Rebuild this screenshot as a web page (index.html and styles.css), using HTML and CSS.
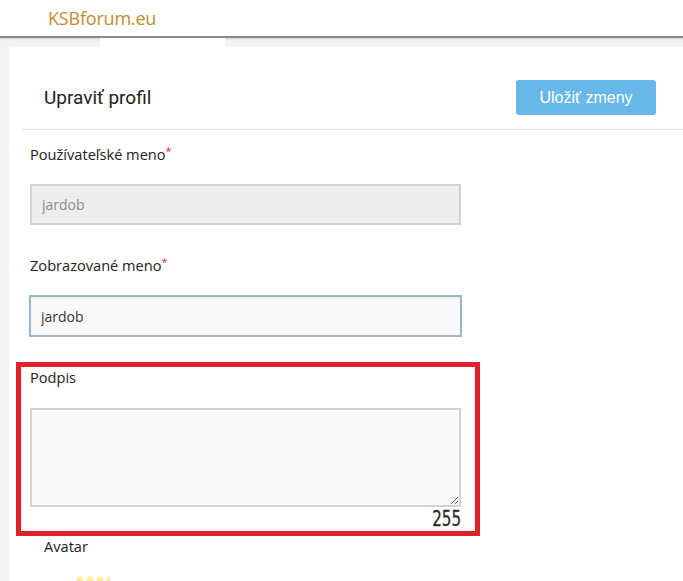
FILE: index.html
```html
<!DOCTYPE html>
<html lang="sk">
<head>
  <meta charset="UTF-8">
  <title>Upraviť profil – KSBforum.eu</title>
  <link rel="stylesheet" href="styles.css">
</head>
<body>

<header class="topbar">
  <a class="logo" href="#">KSBforum.eu</a>
</header>

<div class="tabs">
  <div class="tab"></div>
</div>

<main class="card">
  <div class="card-head">
    <h1>Upraviť profil</h1>
    <button class="btn-save">Uložiť zmeny</button>
  </div>

  <form class="profile-form">
    <div class="field">
      <label>Používateľské meno<span class="req">*</span></label>
      <input class="input disabled" type="text" value="jardob" disabled>
    </div>

    <div class="field">
      <label>Zobrazované meno<span class="req">*</span></label>
      <input class="input focused" type="text" value="jardob">
    </div>

    <div class="field highlight">
      <label>Podpis</label>
      <textarea class="textarea"></textarea>
      <div class="counter"><span>255</span></div>
    </div>

    <div class="field avatar">
      <label>Avatar</label>
      <div class="avatar-preview"></div>
    </div>
  </form>
</main>

</body>
</html>
```

FILE: styles.css
```css
body {
  margin: 0;
  padding: 0;
  background-color: #f3f3f3;
  font-family: "Open Sans", "Noto Sans", sans-serif;
  color: #333;
  overflow: hidden;
}
.topbar {
  background: white;
  height: 36px;
  border-bottom: 2px solid #8c8c8c;
  box-shadow: 0 1px 2px rgba(0,0,0,0.15);
  padding-left: 48px;
  display: flex;
  align-items: center;
}
.logo {
  color: #c38b2c;
  font-size: 18px;
  text-decoration: none;
  letter-spacing: -0.2px;
  margin-top: -1px;
}
.tabs {
  height: 9px;
  padding-left: 100px;
  display: flex;
}
.tab {
  width: 125px;
  background: white;
}
.card {
  background: white;
  margin-left: 9px;
  height: 534px;
  overflow: hidden;
}
.card-head {
  margin-left: 13px;
  padding: 33px 27px 14px 22px;
  border-bottom: 1px solid #e4e4e4;
  display: flex;
  align-items: center;
  justify-content: space-between;
}
.card-head h1 {
  margin: 0;
  font-family: Roboto, "Liberation Sans", sans-serif;
  font-weight: normal;
  font-size: 19px;
  color: #222;
}
.btn-save {
  width: 140px;
  height: 35px;
  background-color: #67b7eb;
  color: white;
  border: none;
  border-radius: 3px;
  font-family: "Liberation Sans", Arial, sans-serif;
  font-size: 16px;
  padding: 0;
}
.profile-form {
  padding: 14px 0 0 21px;
  width: 431px;
}
.field {
  margin-bottom: 30px;
}
.field label {
  display: block;
  font-size: 14.6px;
  line-height: 20px;
  color: #222;
  margin-bottom: 20px;
}
.req {
  color: #d9302c;
  font-size: 11px;
  vertical-align: top;
  line-height: 14px;
}
.input {
  box-sizing: border-box;
  width: 431px;
  height: 41px;
  padding: 0 10px;
  border: 1px solid #c9c9c9;
  font-family: "Open Sans", "Noto Sans", sans-serif;
  font-size: 14px;
  color: #333;
  background: #fafafa;
  display: block;
}
.input.disabled {
  background: #eeeeee;
  color: #8a8a8a;
  border-width: 2px;
  border-color: #d2d2d2;
}
.input.focused {
  height: 42px;
  margin-left: -1px;
  width: 433px;
  border: 2px solid #9cb9cc;
  box-shadow: inset 0 1px 2px rgba(0,0,0,0.08);
  outline: none;
}
.field.highlight {
  margin: -5px -19px 0 -14px;
  padding: 0 14px 0 9px;
  border: 5px solid #e0212c;
}
.highlight label {
  margin-bottom: 21px;
}
.textarea {
  box-sizing: border-box;
  display: block;
  width: 431px;
  height: 99px;
  border: 2px solid #d3d3d3;
  background: #fafafa;
  resize: vertical;
  margin: 0;
}
.counter {
  text-align: right;
  height: 24px;
  line-height: 24px;
}
.counter span {
  display: inline-block;
  font-family: "DejaVu Sans", sans-serif;
  font-size: 21px;
  color: #2a2a2a;
  -webkit-text-stroke: 0.3px #2a2a2a;
  transform: scaleX(0.72);
  transform-origin: right center;
}
.field.avatar {
  margin: 0;
  padding-left: 14px;
}
.field.avatar label {
  line-height: 20px;
  margin-bottom: 18px;
}
.avatar-preview {
  margin-left: 30px;
  width: 36px;
  height: 10px;
  background: radial-gradient(circle at 6px 6px, #fbeea0 3px, transparent 4px) 0 0 / 10px 10px repeat-x;
}
```
